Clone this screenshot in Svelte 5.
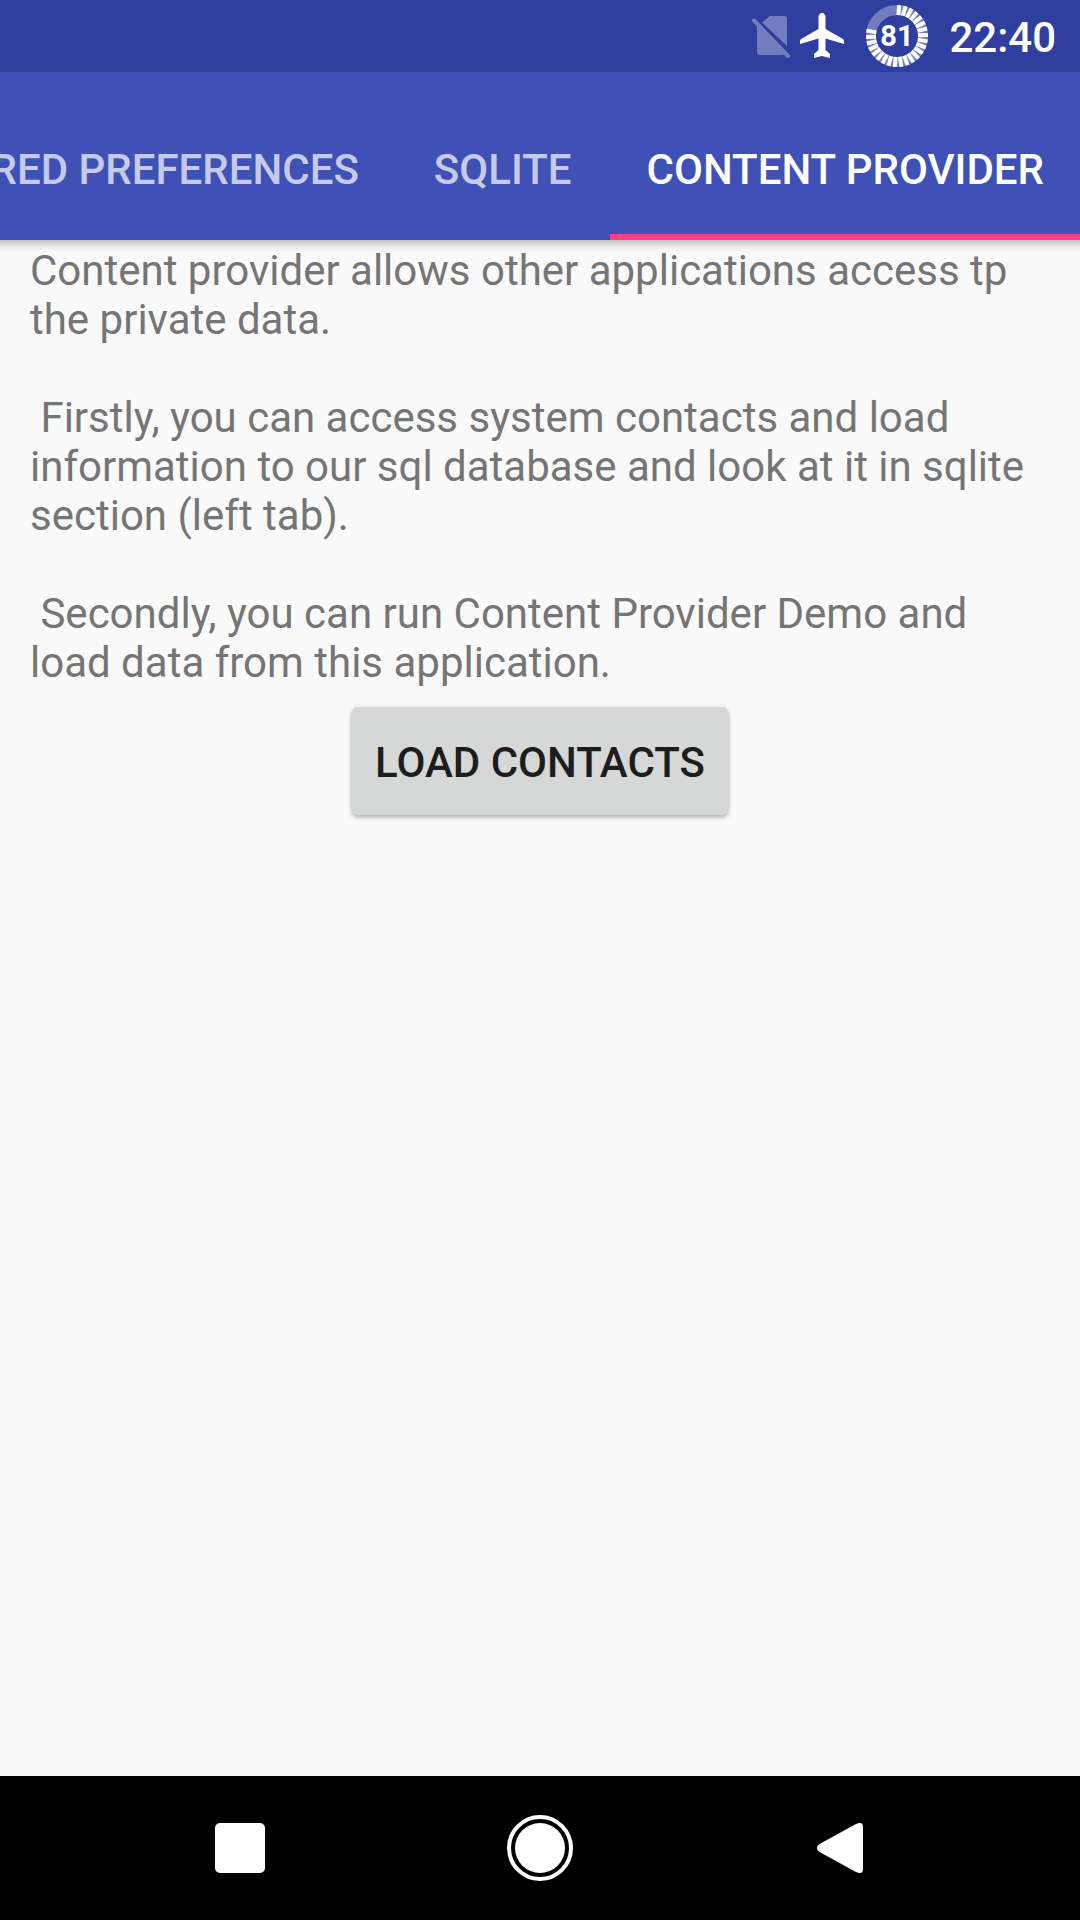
<script>
  const battery = 81;
  const pitch = 360 / 30;
  const tickCount = Math.round((battery / 100) * 30);
  const ticks = Array.from({ length: tickCount }, (_, i) => i * pitch + 4);

  const tabs = ['SHARED PREFERENCES', 'SQLITE', 'CONTENT PROVIDER'];
  let selected = $state(2);

  const message =
    'Content provider allows other applications access tp the private data.\n\n' +
    ' Firstly, you can access system contacts and load information to our sql database and look at it in sqlite section (left tab).\n\n' +
    ' Secondly, you can run Content Provider Demo and load data from this application.';
</script>

<div class="screen">
  <header class="status">
    <svg class="sim" viewBox="0 0 40 44" aria-label="No SIM">
      <path d="M20 2H34Q37 2 37 5V32L12 8.500Z" />
      <path d="M7 12L35 40Q34 41 33 41H10Q7 41 7 38Z" />
      <path d="M4 6.500L38 42" fill="none" stroke="#fff" stroke-width="4" stroke-linecap="round" />
    </svg>
    <svg class="plane" viewBox="0 0 44 46" aria-label="Airplane mode">
      <path d="M44 31V28Q44 27 43 26L25.500 16V4C25.500 2 24 0 22 0S18.500 2 18.500 4V16L1 26Q0 27 0 28V31L18.500 25.500V37L14 41V45L22 43L30 45V41L25.500 37V25.500Z" />
    </svg>
    <svg class="battery" viewBox="0 0 62 62" aria-label="Battery">
      <circle class="track" cx="31" cy="31" r="26" />
      {#each ticks as angle}
        <path class="tick" d="M31 0V10" transform="rotate({angle} 31 31)" />
      {/each}
      <text x="31" y="41">{battery}</text>
    </svg>
    <time>22:40</time>
  </header>

  <div class="tabs" role="tablist">
    {#each tabs as tab, i}
      <button role="tab" aria-selected={selected === i} class:active={selected === i} onclick={() => (selected = i)}>{tab}</button>
    {/each}
  </div>

  <main>
    <p>{message}</p>
    <button class="load">LOAD CONTACTS</button>
  </main>

  <nav>
    <button aria-label="Recent apps">
      <svg viewBox="0 0 66 66"><rect x="8" y="8" width="50" height="50" rx="5" /></svg>
    </button>
    <button aria-label="Home">
      <svg viewBox="0 0 66 66"><circle cx="33" cy="33" r="31" fill="none" stroke="#fff" stroke-width="4" /><circle cx="33" cy="33" r="25" /></svg>
    </button>
    <button aria-label="Back">
      <svg viewBox="0 0 66 66"><path d="M12.500 29L49 9Q56 6 56 12V54Q56 60 49 57L12.500 37Q7 33 12.500 29Z" /></svg>
    </button>
  </nav>
</div>

<style>
  :global(body) {
    margin: 0;
  }

  .screen {
    min-height: 100vh;
    display: flex;
    flex-direction: column;
    background: #fafafa;
    font-family: Roboto, sans-serif;
    font-size: 42px;
    line-height: 49px;
  }

  button {
    border: 0;
    font: inherit;
    font-weight: 500;
    cursor: pointer;
  }

  svg {
    display: block;
    fill: #fff;
  }

  .status {
    height: 72px;
    display: flex;
    align-items: center;
    justify-content: flex-end;
    padding-right: 24px;
    background: #303f9f;
    color: #fff;
  }

  .sim {
    width: 40px;
    height: 44px;
    margin-right: 10px;
    opacity: 0.32;
  }

  .plane {
    width: 44px;
    height: 46px;
    margin-right: 22px;
  }

  .battery {
    width: 62px;
    height: 62px;
    margin-right: 21px;
  }

  .track {
    fill: none;
    stroke: #fff;
    stroke-opacity: 0.32;
    stroke-width: 10;
  }

  .tick {
    stroke: #fff;
    stroke-width: 4;
  }

  .battery text {
    font-size: 29px;
    font-weight: 700;
    text-anchor: middle;
  }

  time {
    padding-top: 2px;
    font-weight: 500;
  }

  .tabs {
    height: 168px;
    display: flex;
    gap: 2px;
    justify-content: flex-end;
    overflow: hidden;
    background: #3f51b5;
  }

  .tabs button {
    flex: none;
    padding: 32px 36px 0 37px;
    border-bottom: 6px solid transparent;
    background: none;
    color: #c5cae9;
    white-space: nowrap;
  }

  .tabs .active {
    border-color: #ff4081;
    color: #fff;
  }

  main {
    flex: 1;
    display: flex;
    flex-direction: column;
    align-items: center;
    padding: 6px 30px 30px;
    box-shadow: inset 0 14px 12px -12px rgba(0, 0, 0, 0.35);
  }

  p {
    align-self: stretch;
    margin: 0 0 20px;
    color: #757575;
    white-space: pre-wrap;
  }

  .load {
    height: 108px;
    padding: 2px 23px 0;
    border-radius: 6px;
    background: #d6d7d7;
    color: #1d1d1d;
    box-shadow: 0 2px 5px rgba(0, 0, 0, 0.35);
  }

  nav {
    height: 144px;
    display: flex;
    padding: 0 90px;
    background: #000;
  }

  nav button {
    flex: 1;
    display: flex;
    align-items: center;
    justify-content: center;
    background: none;
  }

  nav svg {
    width: 66px;
    height: 66px;
  }
</style>
